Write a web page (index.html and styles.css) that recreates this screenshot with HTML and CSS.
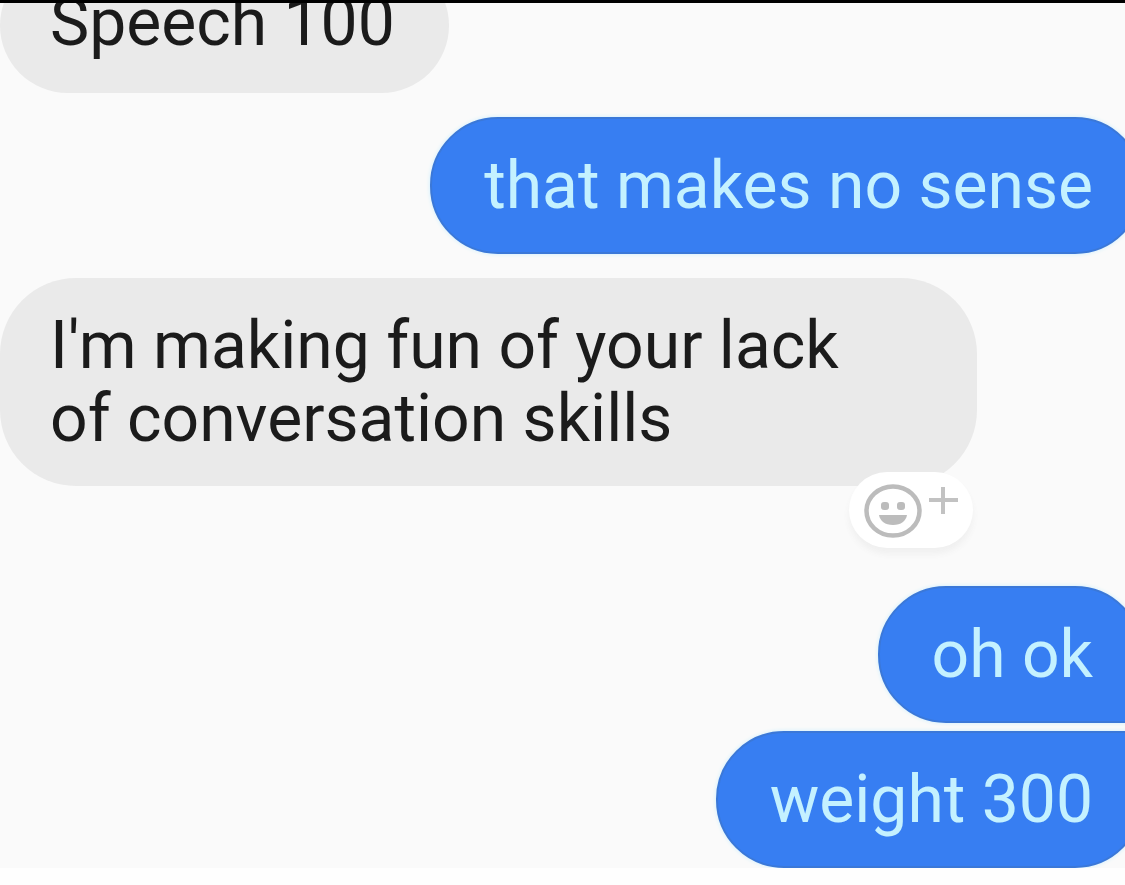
FILE: index.html
```html
<!DOCTYPE html>
<html lang="en">
<head>
<meta charset="utf-8">
<meta name="viewport" content="width=device-width, initial-scale=1">
<title>Conversation</title>
<link rel="stylesheet" href="styles.css">
</head>
<body>
<main class="chat">
  <p class="bubble received clipped">Speech 100</p>
  <p class="bubble sent">that makes no sense</p>
  <div class="message">
    <p class="bubble received">I'm making fun of your lack<br>of conversation skills</p>
    <button class="react" type="button" aria-label="Add reaction">
      <svg class="react-icon" viewBox="0 0 96 56" aria-hidden="true">
        <ellipse cx="30" cy="29" rx="26.500" ry="24.500" fill="none" stroke="#bcbcbc" stroke-width="4.500"/>
        <rect x="18" y="20" width="8" height="8" rx="3" fill="#bcbcbc"/>
        <rect x="34" y="20" width="8" height="8" rx="3" fill="#bcbcbc"/>
        <path d="M16 33H44C43 39 38 43 30 43S17 39 16 33Z" fill="#bcbcbc"/>
        <path d="M80 5V32M66 18H95" fill="none" stroke="#c2c2c2" stroke-width="4"/>
      </svg>
    </button>
  </div>
  <div class="group">
    <p class="bubble sent first">oh ok</p>
    <p class="bubble sent last">weight 300</p>
  </div>
</main>
</body>
</html>
```
FILE: styles.css
```css
* {
  box-sizing: border-box;
}

body {
  margin: 0;
  min-height: 100vh;
  background: #fefefe;
  font-family: Roboto, "Liberation Sans", sans-serif;
  overflow: hidden;
}

.chat {
  display: flex;
  flex-direction: column;
  gap: 24px;
  border-top: 3px solid #000;
  background: #fafafa;
  overflow: hidden;
}

.bubble {
  width: fit-content;
  margin: 0;
  padding: 31px 54px 31px 50px;
  border-radius: 68px;
  font-size: 66px;
  line-height: 73px;
}

.received {
  background: #eaeaea;
  color: #1b1b1b;
}

.clipped {
  margin-top: -45px;
  padding-top: 28px;
  padding-bottom: 34px;
}

.sent {
  align-self: flex-end;
  margin-right: -18px;
  border: 2px solid #3b78d8;
  padding: 30px 48px 30px 52px;
  background: #377ef2;
  color: #c4f1ff;
  box-shadow: 0 0 4px #c9eeff;
}

.message {
  position: relative;
  width: fit-content;
}

.message .bubble {
  padding-right: 138px;
  border-radius: 76px;
}

.react {
  position: absolute;
  right: 4px;
  bottom: -62px;
  display: flex;
  padding: 10px 14px;
  border: 0;
  border-radius: 38px;
  background: #fff;
  box-shadow: 0 6px 6px #f0f0f0;
}

.react-icon {
  width: 96px;
  height: 56px;
}

.group {
  display: flex;
  flex-direction: column;
  gap: 8px;
  margin-top: 76px;
}

.first {
  border-bottom-right-radius: 8px;
}

.last {
  border-top-right-radius: 8px;
}
```
